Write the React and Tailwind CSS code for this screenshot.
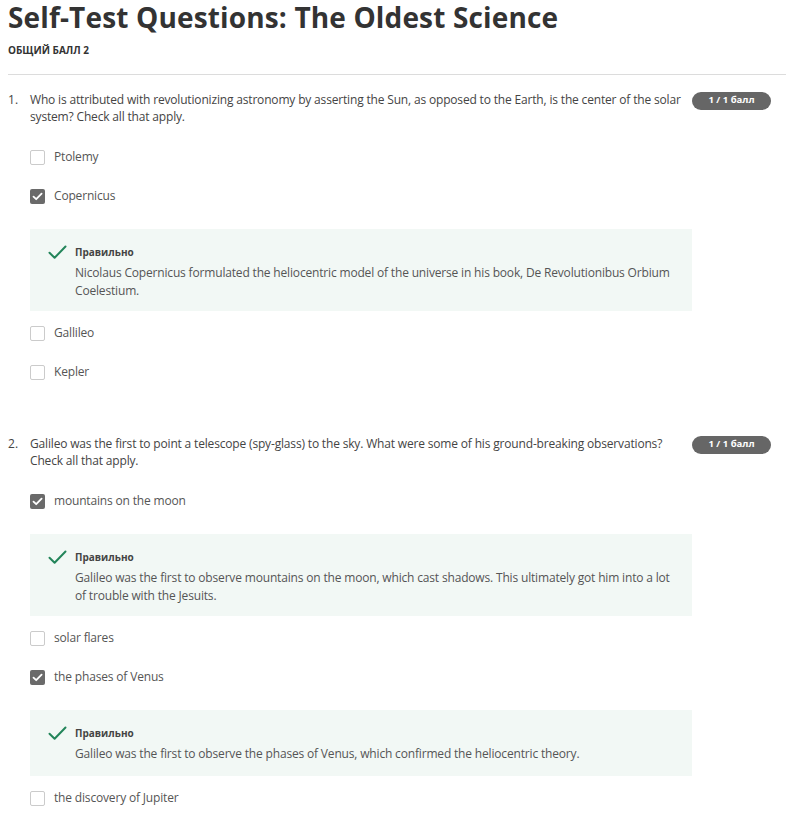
import React from "react";

const font = { fontFamily: '"Open Sans", "Noto Sans", sans-serif' };

function Checkbox({ checked }) {
  if (checked) {
    return (
      <div className="w-[15px] h-[15px] rounded-[2px] bg-[#6a6a6a] flex items-center justify-center shrink-0">
        <svg width="11" height="9" viewBox="0 0 11 9" fill="none">
          <path d="M1.5 4.6 L4.2 7.2 L9.6 1.6" stroke="#fff" strokeWidth="1.8" strokeLinecap="round" strokeLinejoin="round" />
        </svg>
      </div>
    );
  }
  return <div className="w-[15px] h-[15px] rounded-[2px] border-[1.5px] border-[#cbcbcb] bg-white shrink-0" />;
}

function Option({ label, checked, className = "" }) {
  return (
    <div className={"flex items-center h-[20px] " + className}>
      <Checkbox checked={checked} />
      <span className="ml-[9px] text-[12px] tracking-[-0.17px] text-[#555] leading-[20px]">{label}</span>
    </div>
  );
}

function Feedback({ text, className = "", pb = "pb-[11px]" }) {
  return (
    <div className={"bg-[#f2f8f5] pl-[18px] pr-4 pt-4 flex " + pb + " " + className}>
      <svg width="19" height="15" viewBox="0 0 19 15" fill="none" className="shrink-0">
        <path d="M1.5 7.8 L6.6 12.8 L17.5 1.5" stroke="#23855a" strokeWidth="2" strokeLinecap="round" strokeLinejoin="round" />
      </svg>
      <div className="ml-[8px]">
        <div className="text-[10px] font-bold text-[#444] leading-[14px]">Правильно</div>
        <div className="mt-[5px] text-[12px] tracking-[-0.17px] text-[#555] leading-[18px]">{text}</div>
      </div>
    </div>
  );
}

function Badge() {
  return (
    <div className="w-[79px] h-[18px] rounded-full bg-[#666] text-white text-[9.5px] font-bold flex items-center justify-center shrink-0">
      1 / 1 балл
    </div>
  );
}

function Question({ num, text, children, className = "" }) {
  return (
    <div className={"flex " + className}>
      <div className="w-[22px] shrink-0 text-[12px] text-[#444] leading-[17px]">{num}.</div>
      <div className="w-[662px] shrink-0">
        <div className="text-[12px] tracking-[-0.17px] text-[#444] leading-[17px] pr-[4px]">{text}</div>
        {children}
      </div>
      <div className="pt-[0.5px]">
        <Badge />
      </div>
    </div>
  );
}

export default function App() {
  return (
    <div className="bg-white min-h-[817px] pl-[8px] pb-10" style={font}>
      <h1 className="text-[28px] tracking-[0.15px] font-bold text-[#333] leading-[34px] pt-0">
        Self-Test Questions: The Oldest Science
      </h1>
      <div className="mt-[9px] text-[10px] font-bold text-[#333] leading-[14px]">ОБЩИЙ БАЛЛ 2</div>
      <div className="mt-[17px] h-px bg-[#dcdcdc]" />

      <Question
        className="mt-[16px]"
        num={1}
        text="Who is attributed with revolutionizing astronomy by asserting the Sun, as opposed to the Earth, is the center of the solar system? Check all that apply."
      >
        <Option className="mt-[22px]" label="Ptolemy" />
        <Option className="mt-[19px]" label="Copernicus" checked />
        <Feedback
          className="mt-[23px]"
          text="Nicolaus Copernicus formulated the heliocentric model of the universe in his book, De Revolutionibus Orbium Coelestium."
        />
        <Option className="mt-[12px]" label="Gallileo" />
        <Option className="mt-[19px]" label="Kepler" />
      </Question>

      <Question
        className="mt-[53px]"
        num={2}
        text="Galileo was the first to point a telescope (spy-glass) to the sky. What were some of his ground-breaking observations? Check all that apply."
      >
        <Option className="mt-[22px]" label="mountains on the moon" checked />
        <Feedback
          className="mt-[23px]"
          text="Galileo was the first to observe mountains on the moon, which cast shadows. This ultimately got him into a lot of trouble with the Jesuits."
        />
        <Option className="mt-[12px]" label="solar flares" />
        <Option className="mt-[19px]" label="the phases of Venus" checked />
        <Feedback
          className="mt-[23px]"
          pb="pb-[13px]"
          text="Galileo was the first to observe the phases of Venus, which confirmed the heliocentric theory."
        />
        <Option className="mt-[12px]" label="the discovery of Jupiter" />
      </Question>
    </div>
  );
}
